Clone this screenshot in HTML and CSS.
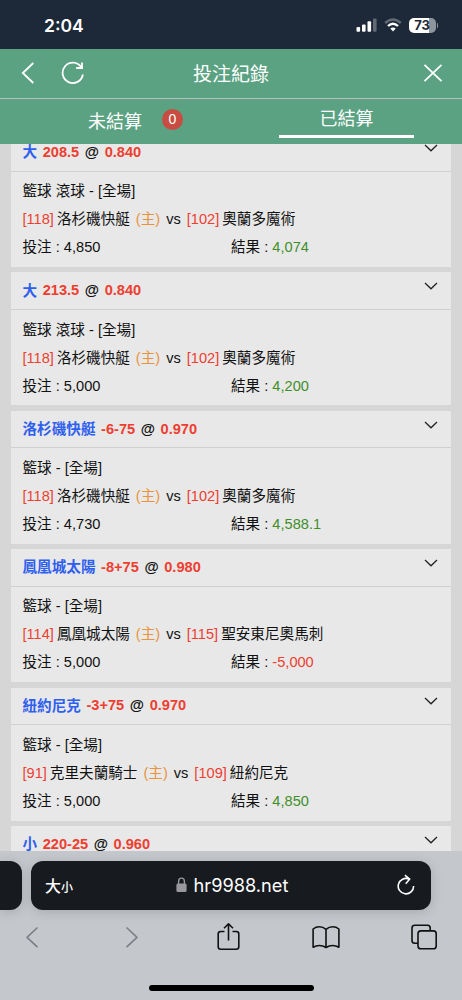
FILE: index.html
```html
<!DOCTYPE html>
<html lang="zh-Hant">
<head>
    <meta charset="UTF-8">
    <meta name="viewport" content="width=device-width, initial-scale=1.0">
    <title>投注紀錄</title>
    <link rel="stylesheet" href="styles.css">
</head>
<body>

    <div class="status-bar">
        <span class="time">2:04</span>
        <div class="status-icons">
            <svg width="22" height="14" viewBox="0 0 22 14" fill="#fff">
                <rect x="0.5" y="9" width="3.6" height="4.8" rx="1"/>
                <rect x="6" y="6.5" width="3.6" height="7.3" rx="1"/>
                <rect x="11.5" y="3.3" width="3.6" height="10.5" rx="1"/>
                <rect x="17" y="0.6" width="3.6" height="13.2" rx="1" opacity="0.3"/>
            </svg>
            <svg class="wifi" width="18" height="14" viewBox="0 0 18 14" fill="none" stroke-width="2.4">
                <path d="M1.2 5 Q9 -2.2 16.8 5" stroke="#fff" opacity="0.3"/>
                <path d="M4 8 Q9 3.3 14 8" stroke="#fff"/>
                <path d="M6.3 10.6 Q9 8.6 11.7 10.6 L9 13.5Z" fill="#fff"/>
            </svg>
            <div class="battery">73</div>
            <div class="battery-cap"></div>
        </div>
    </div>

    <div class="header">
        <svg class="back" width="14" height="22" viewBox="0 0 14 22"><path d="M12.3 1 L1.8 11 L12.3 21"/></svg>
        <svg class="reload" width="24" height="24" viewBox="0 0 24 24"><path d="M21.9 13.5 A10.2 10.2 0 1 1 20.3 6.2 M21 1.5 V7 H15.2"/></svg>
        <h1>投注紀錄</h1>
        <svg class="close" width="20" height="20" viewBox="0 0 20 20"><path d="M1.5 1.8 L18.5 18.2 M18.5 1.8 L1.5 18.2"/></svg>
    </div>

    <div class="tabs">
        <div class="tab">未結算<span class="badge">0</span></div>
        <div class="tab active">已結算</div>
    </div>

    <div class="list">
        <div class="card">
            <div class="card-head">
                <b class="team">大</b> <b class="red">208.5</b> <b>@</b> <b class="red">0.840</b>
                <svg class="arrow" width="14" height="8" viewBox="0 0 14 8"><path d="M1 1 L7 6.8 L13 1"/></svg>
            </div>
            <div class="card-body">
                <div>籃球 滾球 - [全場]</div>
                <div class="match"><span class="red">[118]</span><span>洛杉磯快艇</span><span class="home">(主)</span><span class="vs">vs</span><span class="red">[102]</span><span>奧蘭多魔術</span></div>
                <div class="amounts"><span>投注 : 4,850</span><span>結果 : <i class="green">4,074</i></span></div>
            </div>
        </div>
        <div class="card">
            <div class="card-head">
                <b class="team">大</b> <b class="red">213.5</b> <b>@</b> <b class="red">0.840</b>
                <svg class="arrow" width="14" height="8" viewBox="0 0 14 8"><path d="M1 1 L7 6.8 L13 1"/></svg>
            </div>
            <div class="card-body">
                <div>籃球 滾球 - [全場]</div>
                <div class="match"><span class="red">[118]</span><span>洛杉磯快艇</span><span class="home">(主)</span><span class="vs">vs</span><span class="red">[102]</span><span>奧蘭多魔術</span></div>
                <div class="amounts"><span>投注 : 5,000</span><span>結果 : <i class="green">4,200</i></span></div>
            </div>
        </div>
        <div class="card">
            <div class="card-head">
                <b class="team">洛杉磯快艇</b> <b class="red">-6-75</b> <b>@</b> <b class="red">0.970</b>
                <svg class="arrow" width="14" height="8" viewBox="0 0 14 8"><path d="M1 1 L7 6.8 L13 1"/></svg>
            </div>
            <div class="card-body">
                <div>籃球 - [全場]</div>
                <div class="match"><span class="red">[118]</span><span>洛杉磯快艇</span><span class="home">(主)</span><span class="vs">vs</span><span class="red">[102]</span><span>奧蘭多魔術</span></div>
                <div class="amounts"><span>投注 : 4,730</span><span>結果 : <i class="green">4,588.1</i></span></div>
            </div>
        </div>
        <div class="card">
            <div class="card-head">
                <b class="team">鳳凰城太陽</b> <b class="red">-8+75</b> <b>@</b> <b class="red">0.980</b>
                <svg class="arrow" width="14" height="8" viewBox="0 0 14 8"><path d="M1 1 L7 6.8 L13 1"/></svg>
            </div>
            <div class="card-body">
                <div>籃球 - [全場]</div>
                <div class="match"><span class="red">[114]</span><span>鳳凰城太陽</span><span class="home">(主)</span><span class="vs">vs</span><span class="red">[115]</span><span>聖安東尼奧馬刺</span></div>
                <div class="amounts"><span>投注 : 5,000</span><span>結果 : <i class="red">-5,000</i></span></div>
            </div>
        </div>
        <div class="card">
            <div class="card-head">
                <b class="team">紐約尼克</b> <b class="red">-3+75</b> <b>@</b> <b class="red">0.970</b>
                <svg class="arrow" width="14" height="8" viewBox="0 0 14 8"><path d="M1 1 L7 6.8 L13 1"/></svg>
            </div>
            <div class="card-body">
                <div>籃球 - [全場]</div>
                <div class="match"><span class="red">[91]</span><span>克里夫蘭騎士</span><span class="home">(主)</span><span class="vs">vs</span><span class="red">[109]</span><span>紐約尼克</span></div>
                <div class="amounts"><span>投注 : 5,000</span><span>結果 : <i class="green">4,850</i></span></div>
            </div>
        </div>
        <div class="card">
            <div class="card-head">
                <b class="team">小</b> <b class="red">220-25</b> <b>@</b> <b class="red">0.960</b>
                <svg class="arrow" width="14" height="8" viewBox="0 0 14 8"><path d="M1 1 L7 6.8 L13 1"/></svg>
            </div>
        </div>
    </div>

    <div class="browser">
        <div class="address-row">
            <div class="prev-tab"></div>
            <div class="address">
                <span class="text-size">大<small>小</small></span>
                <span class="url">
                    <svg width="11" height="16" viewBox="0 0 11 16"><path d="M2.6 7 V4.3 A2.9 3.2 0 0 1 8.4 4.3 V7" fill="none" stroke="#98989d" stroke-width="1.4"/><rect x="0.4" y="6.6" width="10.2" height="8.4" rx="1.5" fill="#98989d"/></svg>
                    hr9988.net
                </span>
                <svg class="refresh" width="18" height="22" viewBox="0 0 18 22"><path d="M16.6 12 A7.7 7.7 0 1 1 12 5.1 M7.9 1.2 L12.6 5.2 L8.7 9.7"/></svg>
            </div>
        </div>
        <div class="toolbar">
            <svg class="dim" width="32" height="32" viewBox="0 0 32 32"><path d="M21.5 6.5 L11 16.3 L21.5 26.1"/></svg>
            <svg class="dim" width="32" height="32" viewBox="0 0 32 32"><path d="M12.5 6.5 L23 16.3 L12.5 26.1"/></svg>
            <svg width="32" height="32" viewBox="0 0 32 32"><path d="M12.5 10.5 H8.7 Q6.2 10.5 6.2 13 V25.7 Q6.2 28.2 8.7 28.2 H24.3 Q26.8 28.2 26.8 25.7 V13 Q26.8 10.5 24.3 10.5 H20.5 M16.5 19.5 V3 M12 7.3 L16.5 2.8 L21 7.3"/></svg>
            <svg width="32" height="32" viewBox="0 0 32 32"><path d="M16 8.3 Q13 5.8 9.3 5.8 Q5.8 5.8 3.1 8 V26.2 Q6 24.5 9.3 24.5 Q13 24.5 16 26.5 Q19 24.5 22.7 24.5 Q26 24.5 28.9 26.2 V8 Q26.2 5.8 22.7 5.8 Q19 5.8 16 8.3 V26"/></svg>
            <svg width="32" height="32" viewBox="0 0 32 32"><path d="M10 22.3 H6.8 Q4 22.3 4 19.5 V7 Q4 4.2 6.8 4.2 H19.5 Q22.2 4.2 22.2 7 V9.8"/><rect x="10" y="9.9" width="18.2" height="17.8" rx="2.8"/></svg>
        </div>
        <div class="home-bar"></div>
    </div>

</body>
</html>
```
FILE: styles.css
```css
body {
    margin: 0;
    width: 462px;
    height: 1000px;
    overflow: hidden;
    display: flex;
    flex-direction: column;
    font-family: "Liberation Sans", "Noto Sans CJK TC", sans-serif;
    font-size: 14.6px;
    color: #111;
    background-color: #d6d6d6;
}

svg {
    display: block;
    flex-shrink: 0;
}

.status-bar {
    flex: 0 0 49px;
    box-sizing: border-box;
    display: flex;
    justify-content: space-between;
    align-items: center;
    padding: 1px 24px 0 44px;
    background-color: #1d2939;
    color: #fff;
}

.time {
    font-family: Inter, sans-serif;
    font-size: 17.5px;
    font-weight: 600;
}

.status-icons {
    display: flex;
    align-items: center;
}

.wifi {
    margin: 0 7px 0 6px;
}

.battery {
    width: 27px;
    height: 15px;
    border-radius: 5px;
    background: linear-gradient(to right, #fff 75%, #8e949c 75%);
    color: #1d2939;
    font: 700 13px/15px Inter, sans-serif;
    text-align: center;
}

.battery-cap {
    width: 1.5px;
    height: 5px;
    margin-left: 1px;
    border-radius: 0 2px 2px 0;
    background-color: #8e949c;
}

.header {
    flex: 0 0 50px;
    box-sizing: border-box;
    display: flex;
    align-items: center;
    padding: 0 19px 2px 21px;
    background-color: #5ba283;
    border-bottom: 1.5px solid #b9bfbb;
}

.header svg {
    fill: none;
    stroke: #fff;
    stroke-width: 1.8;
}

.reload {
    margin-left: 26px;
}

.header h1 {
    flex: 1;
    margin: 0;
    padding: 4px 46px 0 0;
    font-size: 19px;
    font-weight: 400;
    line-height: 28px;
    text-align: center;
    color: #fff;
}

.tabs {
    flex: 0 0 45px;
    display: flex;
    background-color: #5ba283;
    color: #fff;
    font-size: 18px;
}

.tab {
    flex: 1;
    box-sizing: border-box;
    display: flex;
    justify-content: center;
    align-items: center;
    padding: 0 0 3px 40px;
}

.tab.active {
    flex: none;
    width: 135px;
    height: 39px;
    margin: 0 48px;
    padding: 0;
    border-bottom: 3px solid #fff;
}

.badge {
    width: 21px;
    height: 21px;
    margin: -2px 0 0 20px;
    border-radius: 50%;
    background-color: #c94c42;
    font-size: 14px;
    line-height: 21px;
    text-align: center;
}

.list {
    flex: 0 0 707px;
    overflow: hidden;
    padding: 0 11px;
}

.card {
    height: 133px;
    margin-bottom: 5.4px;
    background-color: #e8e8e8;
}

.card:first-child {
    margin-top: -10px;
}

.card-head {
    box-sizing: border-box;
    height: 37.5px;
    display: flex;
    align-items: center;
    gap: 5.6px;
    padding: 0 12px 0 11.5px;
    border-bottom: 1.4px solid #d0d0d0;
    line-height: 18px;
}

.card-head b {
    height: 18px;
    margin-top: -1px;
}

.card-head .team {
    margin-top: 0;
    color: #2f5fee;
}

.red {
    color: #ee3e30;
}

.green {
    color: #3f8f28;
}

.arrow {
    margin: -9px 1px 0 auto;
    fill: none;
    stroke: #222;
    stroke-width: 1.3;
}

.card-body {
    padding: 5.8px 11.5px 0;
    line-height: 28px;
}

.card-body > div {
    height: 28px;
    white-space: pre;
}

.card-body i {
    font-style: normal;
}

.match {
    display: flex;
}

.match .red {
    margin-right: 3px;
}

.match .home {
    margin: 0 6px;
    color: #e8943f;
}

.match .vs {
    margin-right: 6px;
}

.amounts {
    display: grid;
    grid-template-columns: 208.5px 1fr;
}

.browser {
    flex: 1;
    display: flex;
    flex-direction: column;
    align-items: center;
    background-color: #c4c7cc;
}

.address-row {
    align-self: stretch;
    display: flex;
    gap: 9px;
    padding-top: 9.5px;
}

.prev-tab {
    width: 22px;
    height: 49px;
    border-radius: 0 12px 12px 0;
    background-color: #171a1f;
    box-shadow: 0 2px 12px rgba(0, 0, 0, 0.15);
}

.address {
    box-sizing: border-box;
    width: 400px;
    height: 49px;
    display: flex;
    justify-content: space-between;
    align-items: center;
    padding: 0 16px 0 14px;
    border-radius: 12px;
    background-color: #171a1f;
    box-shadow: 0 2px 12px rgba(0, 0, 0, 0.15);
    color: #fff;
}

.text-size {
    font-weight: 500;
    font-size: 16px;
}

.text-size small {
    font-size: 12px;
}

.url {
    display: flex;
    align-items: center;
    gap: 7px;
    margin-right: 6px;
    font-family: Inter, sans-serif;
    font-size: 18.2px;
}

.refresh {
    fill: none;
    stroke: #fff;
    stroke-width: 1.6;
}

.toolbar {
    align-self: stretch;
    display: flex;
    justify-content: space-between;
    padding: 11px 22px 0 16px;
}

.toolbar svg {
    fill: none;
    stroke: #111;
    stroke-width: 1.6;
    stroke-linejoin: round;
}

.toolbar .dim {
    stroke: #7c7f84;
}

.home-bar {
    width: 165px;
    height: 6px;
    margin-top: 32.5px;
    border-radius: 3px;
    background-color: #000;
}
```
